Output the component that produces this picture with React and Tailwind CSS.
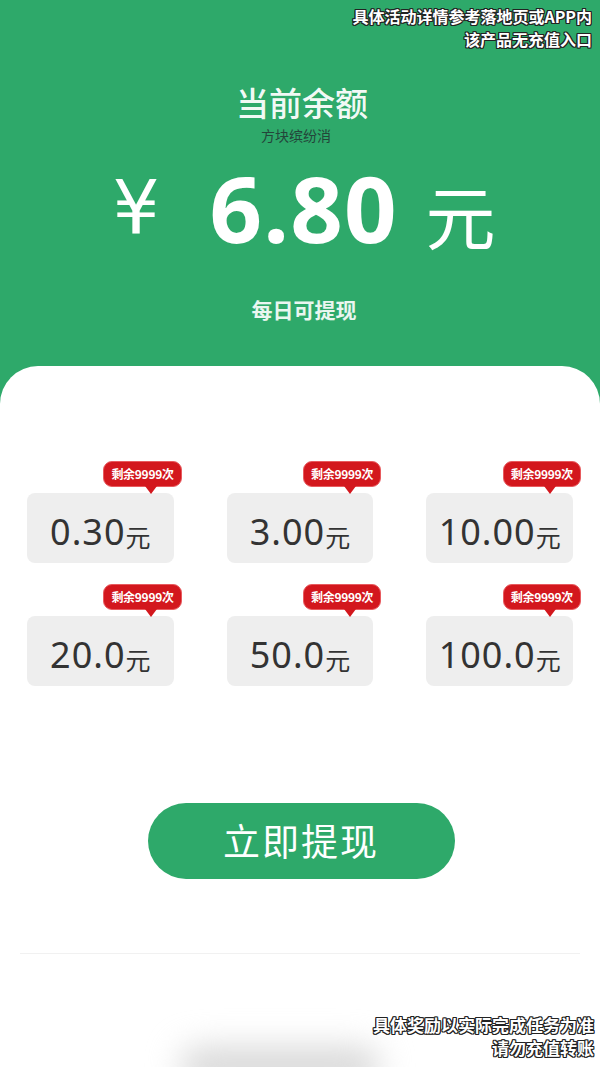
const amounts = [
  { v: '0.30' },
  { v: '3.00' },
  { v: '10.00' },
  { v: '20.0' },
  { v: '50.0' },
  { v: '100.0' },
];

const outline = {
  textShadow:
    '-1px -1px 0 #222, 1px -1px 0 #222, -1px 1px 0 #222, 1px 1px 0 #222, 0 1px 0 #222, 0 -1px 0 #222, 1px 0 0 #222, -1px 0 0 #222',
};

const Badge = () => (
  <div className="absolute -top-[32px] -right-[8px] flex flex-col items-end">
    <div className="h-[26px] px-[7px] flex items-center rounded-[9px] bg-[#d3171d] border border-[#e85a5e] text-white text-[12px] font-bold leading-none tracking-[-0.3px]">
      剩余9999次
    </div>
    <div className="mr-[25px] -mt-[1px] w-0 h-0 border-l-[6px] border-r-[6px] border-t-[8px] border-l-transparent border-r-transparent border-t-[#d3171d]" />
  </div>
);

const App = () => {
  return (
    <div className="relative w-[600px] h-[1067px] overflow-hidden bg-[#2ea96a] font-['Noto_Sans_CJK_SC','Noto_Sans',sans-serif]">
      {/* top right notice */}
      <div className="absolute top-[5px] right-[8px] text-right text-white text-[16px] leading-[23px] font-bold" style={outline}>
        <div>具体活动详情参考落地页或APP内</div>
        <div>该产品无充值入口</div>
      </div>

      {/* balance header */}
      <div className="h-[366px] flex flex-col items-center pt-[85px]">
        <div className="text-white/95 text-[33px] leading-[34px] font-medium ml-[4px]">当前余额</div>
        <div className="text-[#24453a] text-[14px] leading-[15px] mt-[9px] mr-[8px]">方块缤纷消</div>
        <div className="flex items-center h-[70px] text-white mt-[30px] ml-[8px]">
          <span className="text-[74px] leading-[70px] font-['DejaVu_Sans',sans-serif]">¥</span>
          <span className="ml-[50px] text-[92px] leading-[70px] font-bold font-['Open_Sans',sans-serif] tracking-[1px]">6.80</span>
          <span className="ml-[28px] text-[70px] leading-[70px] mt-[14px]">元</span>
        </div>
        <div className="mt-[52px] ml-[8px] text-white/90 text-[21px] font-bold leading-[28px]">每日可提现</div>
      </div>

      {/* white card */}
      <div className="bg-white rounded-t-[38px] h-[701px] flex flex-col">
        <div className="grid grid-cols-3 gap-x-[53px] gap-y-[53px] px-[27px] pt-[127px]">
          {amounts.map((a) => (
            <div key={a.v} className="relative h-[70px] rounded-[8px] bg-[#eeeeee] flex items-end justify-center pb-[13px]">
              <Badge />
              <span className="text-[#333] text-[36px] leading-none tracking-[1px] font-['Noto_Sans',sans-serif]">{a.v}</span>
              <span className="text-[#333] text-[25px] leading-none mb-[1px]">元</span>
            </div>
          ))}
        </div>

        <div className="flex justify-center mt-[117px]">
          <button className="w-[307px] h-[76px] rounded-full bg-[#2ea96a] text-white text-[37px] tracking-[2px] ml-[2px]">
            立即提现
          </button>
        </div>

        <div className="mt-[74px] mx-[20px] h-[1px] bg-[#f1f1f1]" />
        <div className="flex-1" />
      </div>

      {/* blurred shade at the bottom */}
      <div className="absolute left-[180px] bottom-[-20px] w-[200px] h-[40px] rounded-full bg-[#d8d8d8] blur-lg" />

      {/* bottom right notice */}
      <div className="absolute bottom-[8px] right-[6px] text-right text-white text-[17px] leading-[23px] font-bold" style={outline}>
        <div>具体奖励以实际完成任务为准</div>
        <div>请勿充值转账</div>
      </div>
    </div>
  );
};

export default App;
